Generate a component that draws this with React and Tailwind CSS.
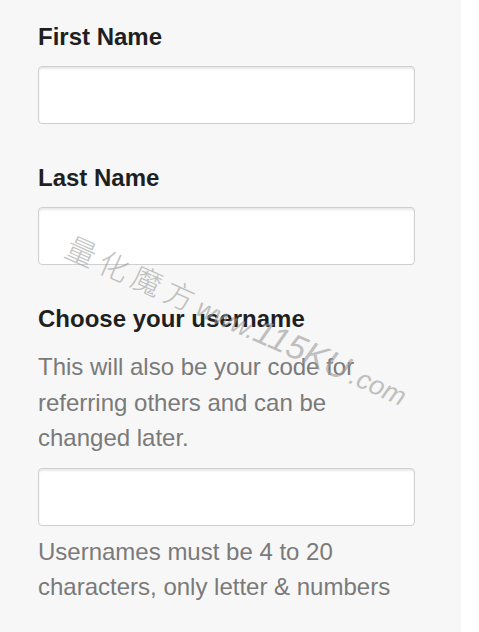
import React from 'react'

const Field = () => (
  <div className="h-[58px] w-[377px] rounded-[4px] border border-[#cfcfcf] bg-white shadow-[inset_0_2px_2px_rgba(0,0,0,0.09)]" />
)

const App = () => {
  return (
    <div className="relative flex min-h-[632px] w-[479px] overflow-hidden bg-white" style={{ fontFamily: '"Liberation Sans", Arial, sans-serif' }}>
      <div className="flex w-[461px] flex-col bg-[#f7f7f7] pl-[38px] pt-[23px]">
        <label className="text-[24px] font-bold leading-[28px] text-[#1f1f1f]">First Name</label>
        <div className="mt-[15px]">
          <Field />
        </div>

        <label className="mt-[40px] text-[24px] font-bold leading-[28px] text-[#1f1f1f]">Last Name</label>
        <div className="mt-[15px]">
          <Field />
        </div>

        <label className="mt-[40px] text-[24px] font-bold leading-[28px] text-[#1f1f1f]">Choose your username</label>
        <p className="mt-[16px] w-[380px] text-[24px] leading-[35.5px] text-[#7a7a7a]">
          This will also be your code for referring others and can be changed later.
        </p>
        <div className="mt-[12px]">
          <Field />
        </div>
        <p className="mt-[8px] w-[400px] text-[24px] leading-[35px] text-[#7a7a7a]">
          Usernames must be 4 to 20 characters, only letter &amp; numbers
        </p>
      </div>

      {/* watermark */}
      <div
        className="pointer-events-none absolute left-[78px] top-[222px] flex origin-top-left rotate-[24deg] items-baseline whitespace-nowrap text-[#9a9a9a] opacity-60"
        style={{ fontFamily: '"Noto Sans CJK SC", sans-serif' }}
      >
        <span className="text-[30px] font-light tracking-[6px]">量化魔方</span>
        <span className="text-[26px] italic" style={{ fontFamily: '"Liberation Sans", sans-serif' }}>www.</span>
        <span className="text-[34px] italic" style={{ fontFamily: '"Liberation Sans", sans-serif' }}>115KU</span>
        <span className="ml-[4px] text-[27px] italic" style={{ fontFamily: '"Liberation Sans", sans-serif' }}>.com</span>
      </div>
    </div>
  )
}

export default App
